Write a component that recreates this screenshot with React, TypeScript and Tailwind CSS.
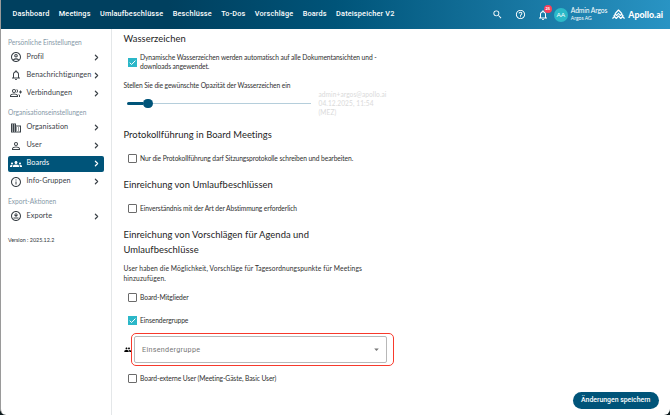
import type { ReactNode } from 'react';
import type { IconType } from 'react-icons';
import { ChevronRight } from 'lucide-react';
import {
    MdArrowDropDown,
    MdBusiness,
    MdGroup,
    MdGroups,
    MdHelpOutline,
    MdInfoOutline,
    MdNotificationsNone,
    MdOutlineAccountCircle,
    MdOutlineDownloadForOffline,
    MdOutlineGroupAdd,
    MdPersonOutline,
    MdSearch,
} from 'react-icons/md';

interface NavEntry {
    label: string;
    icon: IconType;
    active?: boolean;
}

const topNav = ['Dashboard', 'Meetings', 'Umlaufbeschlüsse', 'Beschlüsse', 'To-Dos', 'Vorschläge', 'Boards', 'Dateispeicher V2'];

const personal: NavEntry[] = [
    { label: 'Profil', icon: MdOutlineAccountCircle },
    { label: 'Benachrichtigungen', icon: MdNotificationsNone },
    { label: 'Verbindungen', icon: MdOutlineGroupAdd },
];

const organisation: NavEntry[] = [
    { label: 'Organisation', icon: MdBusiness },
    { label: 'User', icon: MdPersonOutline },
    { label: 'Boards', icon: MdGroups, active: true },
    { label: 'Info-Gruppen', icon: MdInfoOutline },
];

const exports: NavEntry[] = [{ label: 'Exporte', icon: MdOutlineDownloadForOffline }];

function Logo() {
    return (
        <svg viewBox="0 0 26 22" className="ml-[5px] h-[11px] w-[13px] shrink-0" fill="none" stroke="white" strokeWidth="2.3" strokeLinejoin="round" strokeLinecap="round">
            <path d="M6.5 9 L13 2 L19.5 9" />
            <path d="M4 13.5 L7 10.5 L9.5 13 L13 8.5 L16.5 13 L19 10.5 L22 13.5" />
            <path d="M1.5 18.5 L5 15 L8.5 19 L13 14 L17.5 19 L21 15 L24.5 18.5" />
        </svg>
    );
}

function Header() {
    return (
        <header className="flex h-[29px] shrink-0 items-center bg-linear-to-r from-[#00405f] from-25% via-[#005479] via-50% to-[#2994c4] pl-[11.5px] text-white">
            <nav className="flex gap-[9.3px] font-['Roboto',sans-serif] text-[7.3px] font-medium tracking-[0.18px]">
                {topNav.map((item) => (
                    <a key={item} className="whitespace-nowrap">{item}</a>
                ))}
            </nav>
            <div className="ml-auto flex items-center pr-[7px]">
                <MdSearch className="size-[11px]" />
                <MdHelpOutline className="ml-[11.5px] size-[11px]" />
                <div className="relative ml-[11px]">
                    <MdNotificationsNone className="size-[12px]" />
                    <span className="absolute -top-[3.5px] left-[7px] flex size-[8px] items-center justify-center rounded-full bg-[#f8415c] text-[4px] font-bold">25</span>
                </div>
                <span className="ml-[5px] flex size-[14px] items-center justify-center rounded-full bg-[#2bb9c8] text-[6.5px]">AA</span>
                <div className="ml-[3px] leading-[7.5px]">
                    <div className="text-[6.7px] tracking-[-0.1px]">Admin Argos</div>
                    <div className="text-[5px]">Argos AG</div>
                </div>
                <Logo />
                <span className="ml-[3px] text-[8.8px] font-black">Apollo.ai</span>
            </div>
        </header>
    );
}

function SideGroup({ title, entries }: { title: string; entries: NavEntry[] }) {
    return (
        <section>
            <h3 className="h-[11px] text-[6.6px] leading-[11px] text-[#8799a8]">{title}</h3>
            <div className="mt-[1.5px] flex flex-col gap-[2px]">
                {entries.map(({ label, icon: Icon, active }) => (
                    <a
                        key={label}
                        className={`flex h-[16px] items-center rounded-[2px] pl-[2px] text-[7.3px] tracking-[0.07px] ${active ? 'bg-[#005479] text-white' : 'text-[#3b4248]'}`}
                    >
                        <Icon className="size-[12px] shrink-0" />
                        <span className="ml-[4.5px] w-[65px] whitespace-nowrap">{label}</span>
                        <ChevronRight className="size-[9px] shrink-0" strokeWidth={3.2} />
                    </a>
                ))}
            </div>
        </section>
    );
}

function Sidebar() {
    return (
        <aside className="flex w-[111px] shrink-0 flex-col gap-[6px] border-r border-[#e4e7e9] pt-[7.5px] pr-[7px] pl-[7px]">
            <SideGroup title="Persönliche Einstellungen" entries={personal} />
            <SideGroup title="Organisationseinstellungen" entries={organisation} />
            <SideGroup title="Export-Aktionen" entries={exports} />
            <p className="mt-[5px] text-[5.4px] leading-[10px] text-[#30363a]">Version : 2025.12.2</p>
        </aside>
    );
}

function CheckRow({ checked, className, children }: { checked?: boolean; className?: string; children: ReactNode }) {
    return (
        <label className={`flex items-center pl-[4.5px] text-[6.7px] tracking-[-0.09px] ${className ?? ''}`}>
            {checked ? (
                <span className="flex size-[9px] shrink-0 items-center justify-center bg-[#2bb7c8]">
                    <svg viewBox="0 0 9 9" className="size-[9px]" fill="none" stroke="white" strokeWidth="1">
                        <path d="M1.7 4.7 L3.6 6.5 L7.4 2.6" />
                    </svg>
                </span>
            ) : (
                <span className="size-[9px] shrink-0 rounded-[1px] border border-[#6b6b6b]" />
            )}
            <span className="ml-[3px] whitespace-nowrap">{children}</span>
        </label>
    );
}

function Heading({ className, children }: { className?: string; children: ReactNode }) {
    return <h2 className={`text-[9.4px] leading-[15px] tracking-[0.05px] text-[#242424] ${className ?? ''}`}>{children}</h2>;
}

export default function App() {
    return (
        <div className="h-[415px] w-[670px] overflow-hidden bg-[#0c1a1c]">
            <div className="flex h-full flex-col overflow-hidden rounded-b-[6px] border-l border-[#9a9a9a] bg-white font-['Lato',sans-serif]">
                <Header />
                <div className="flex min-h-0 flex-1">
                    <Sidebar />
                    <main className="flex flex-1 flex-col pr-[11.5px] pb-[6px] pl-[11.5px] leading-[9.5px] text-[#303030]">
                        <Heading className="mt-[1.5px]">Wasserzeichen</Heading>
                        <CheckRow checked className="mt-[7px] h-[19px]">
                            Dynamische Wasserzeichen werden automatisch auf alle Dokumentansichten und -<br />
                            downloads angewendet.
                        </CheckRow>
                        <p className="mt-[9px] text-[6.7px] tracking-[-0.09px]">Stellen Sie die gewünschte Opazität der Wasserzeichen ein</p>
                        <div className="flex h-[27px] items-center pl-[3.5px]">
                            <div className="flex w-[184px] items-center">
                                <div className="h-[2.5px] w-[16px] rounded-l-full bg-[#005479]" />
                                <div className="size-[9.5px] rounded-full bg-[#005479]" />
                                <div className="h-[1.5px] flex-1 bg-[#b5cedb]" />
                            </div>
                            <div className="ml-[7.5px] text-[6.6px] leading-[9.2px] tracking-[0.07px] text-[#dadada]">
                                admin+argos@apollo.ai<br />04.12.2025, 11:54<br />(MEZ)
                            </div>
                        </div>

                        <Heading className="mt-[10px]">Protokollführung in Board Meetings</Heading>
                        <CheckRow className="mt-[12px]">Nur die Protokollführung darf Sitzungsprotokolle schreiben und bearbeiten.</CheckRow>

                        <Heading className="mt-[13.5px]">Einreichung von Umlaufbeschlüssen</Heading>
                        <CheckRow className="mt-[12px]">Einverständnis mit der Art der Abstimmung erforderlich</CheckRow>

                        <Heading className="mt-[13.5px]">
                            Einreichung von Vorschlägen für Agenda und<br />Umlaufbeschlüsse
                        </Heading>
                        <p className="mt-[7px] text-[6.7px] tracking-[0.12px]">
                            User haben die Möglichkeit, Vorschläge für Tagesordnungspunkte für Meetings<br />hinzuzufügen.
                        </p>
                        <CheckRow className="mt-[9.5px]">Board-Mitglieder</CheckRow>
                        <CheckRow checked className="mt-[14px]">Einsendergruppe</CheckRow>

                        <div className="mt-[7.5px] flex items-center">
                            <MdGroup className="size-[7.5px] shrink-0 text-black" />
                            <div className="h-[33px] w-[263px] rounded-[5px] border border-[#f83a2c] p-[2px]">
                                <div className="flex h-[27px] w-[253px] items-center justify-between rounded-[2px] border border-[#b8b8b8] pr-[4px] pl-[7px] font-['Roboto',sans-serif] text-[7.2px] tracking-[0.3px] text-[#777]">
                                    Einsendergruppe
                                    <MdArrowDropDown className="size-[11px]" />
                                </div>
                            </div>
                        </div>
                        <CheckRow className="mt-[8px]">Board-externe User (Meeting-Gäste, Basic User)</CheckRow>

                        <button className="mt-auto h-[17px] w-[85.5px] self-end rounded-full bg-[#005479] font-['Roboto',sans-serif] text-[6.9px] font-medium text-white">
                            Änderungen speichern
                        </button>
                    </main>
                </div>
            </div>
        </div>
    );
}
